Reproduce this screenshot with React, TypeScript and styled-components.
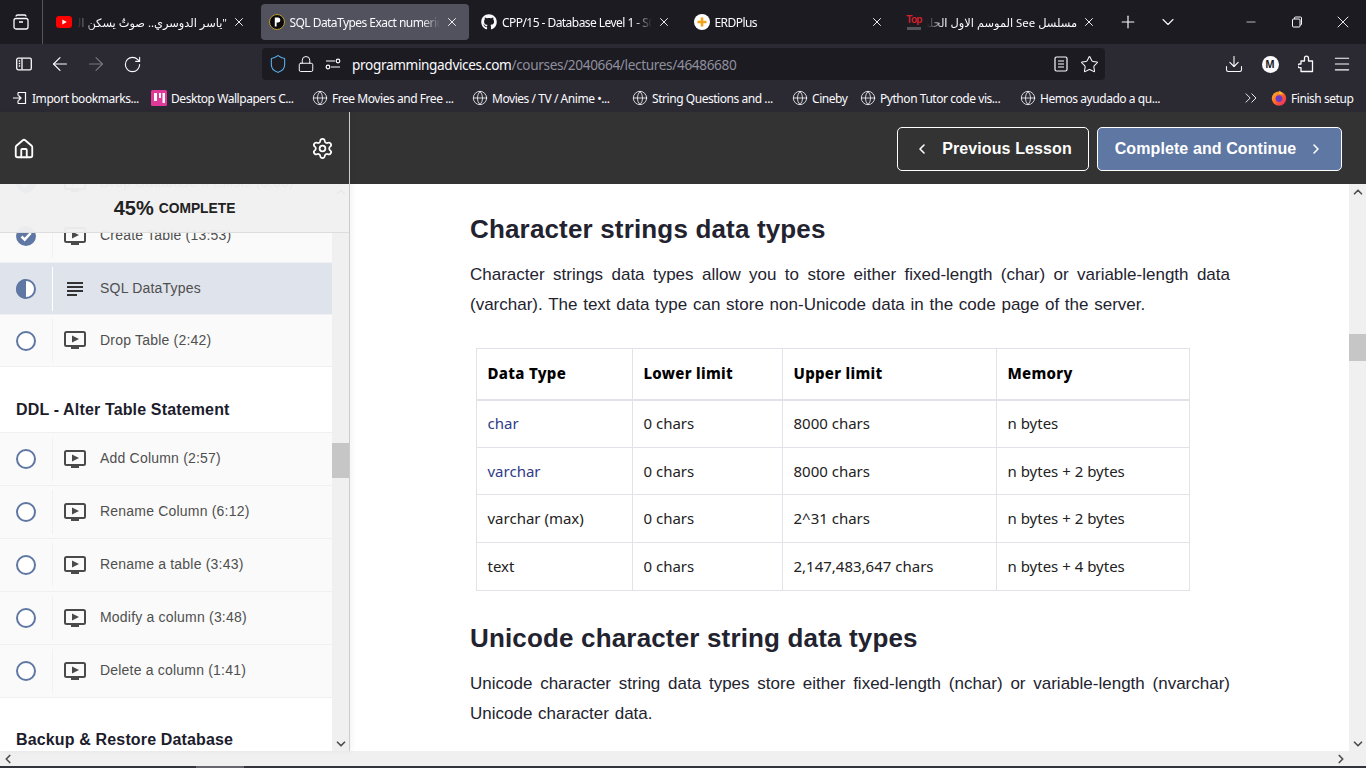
import { ReactNode } from 'react';
import styled, { createGlobalStyle } from 'styled-components';
import {
  ArrowLeft,
  ArrowRight,
  ChevronDown,
  ChevronLeft,
  ChevronRight,
  ChevronUp,
  ChevronsRight,
  Download,
  Globe,
  House,
  Lock,
  Menu,
  Minus,
  Plus,
  RotateCw,
  Settings,
  Shield,
  Star,
  X,
} from 'lucide-react';
import { FaGithub } from 'react-icons/fa';

const uiFont = '"Noto Sans", "DejaVu Sans", sans-serif';
const pageFont = '"Liberation Sans", Arial, sans-serif';

const GlobalStyle = createGlobalStyle`
  html, body {
    margin: 0;
    height: 100%;
    overflow: hidden;
    background: #2b2a33;
  }
  * {
    box-sizing: border-box;
  }
`;

const Window = styled.div`
  width: 1366px;
  height: 768px;
  display: flex;
  flex-direction: column;
  overflow: hidden;
  font-family: ${uiFont};
`;

/* browser chrome */

const TabStrip = styled.div`
  height: 44px;
  display: flex;
  align-items: flex-start;
  background: #1c1b22;
  color: #fbfbfe;
`;

const ViewButton = styled.div`
  width: 43px;
  height: 44px;
  display: flex;
  align-items: center;
  justify-content: center;
  border-right: 1px solid #55555c;
  margin-right: 5px;
`;

const Tab = styled.div<{ $active?: boolean }>`
  width: 208px;
  height: 36px;
  margin: 4px 4.5px 0 0;
  padding: 0 10px 0 8px;
  display: flex;
  align-items: center;
  gap: 5px;
  border-radius: 4px;
  background: ${({ $active }) => ($active ? '#52525e' : 'transparent')};
`;

const Favicon = styled.span`
  width: 16px;
  height: 16px;
  flex: none;
  display: flex;
  align-items: center;
  justify-content: center;
`;

const TabTitle = styled.span<{ $rtl?: boolean }>`
  flex: 1;
  min-width: 0;
  font-size: ${({ $rtl }) => ($rtl ? '11.4px' : '12px')};
  white-space: nowrap;
  overflow: hidden;
  letter-spacing: ${({ $rtl }) => ($rtl ? '0' : '-0.55px')};
  direction: ${({ $rtl }) => ($rtl ? 'rtl' : 'ltr')};
  mask-image: linear-gradient(
    ${({ $rtl }) => ($rtl ? 'to left' : 'to right')},
    #000 88%,
    transparent 100%
  );
`;

const TabClose = styled(X)`
  flex: none;
`;

const TabPlus = styled.div`
  width: 24px;
  height: 44px;
  margin-left: 5px;
  display: flex;
  align-items: center;
  justify-content: center;
`;

const TabList = styled.div`
  width: 24px;
  height: 44px;
  margin-left: 16px;
  display: flex;
  align-items: center;
  justify-content: center;
`;

const WindowControls = styled.div`
  margin-left: auto;
  display: flex;
`;

const WindowButton = styled.div`
  width: 46px;
  height: 44px;
  display: flex;
  align-items: center;
  justify-content: center;
`;

const Toolbar = styled.div`
  height: 40px;
  display: flex;
  align-items: center;
  padding: 0 16px;
  background: #2b2a33;
  color: #fbfbfe;
`;

const ToolIcon = styled.span<{ $width?: number; $dim?: boolean }>`
  width: ${({ $width }) => $width ?? 36}px;
  height: 32px;
  flex: none;
  display: flex;
  align-items: center;
  justify-content: center;
  color: ${({ $dim }) => ($dim ? '#77767e' : '#fbfbfe')};

  svg {
    flex: none;
  }
`;

const UrlBar = styled.div`
  width: 843px;
  height: 32px;
  margin-left: 102px;
  padding: 0 7px 0 8px;
  display: flex;
  align-items: center;
  background: #1c1b22;
  border-radius: 4px;
`;

const UrlText = styled.span`
  flex: 1;
  margin-left: 12px;
  font-size: 13.6px;
  letter-spacing: -0.35px;
  color: #fbfbfe;
  white-space: nowrap;
`;

const UrlPath = styled.span`
  color: #8f8f9d;
`;

const ToolbarEnd = styled.div`
  margin-left: auto;
  margin-right: -10px;
  display: flex;
  align-items: center;
`;

const Avatar = styled.span`
  width: 17px;
  height: 17px;
  border-radius: 50%;
  background: #fbfbfe;
  color: #1c1b22;
  font-size: 10px;
  font-weight: 700;
  display: flex;
  align-items: center;
  justify-content: center;
`;

const BookmarkBar = styled.div`
  height: 28px;
  padding: 0 12px;
  display: flex;
  align-items: center;
  background: #2b2a33;
  color: #fbfbfe;
  font-size: 12px;
  letter-spacing: -0.45px;
  white-space: nowrap;
`;

const Bookmark = styled.span<{ $width: number }>`
  width: ${({ $width }) => $width}px;
  flex: none;
  display: flex;
  align-items: center;
  gap: 4px;
`;

const BookmarkEnd = styled.div`
  margin-left: auto;
  display: flex;
  align-items: center;
  gap: 10px;
`;

/* page */

const Page = styled.div`
  flex: 1;
  min-height: 0;
  display: flex;
  flex-direction: column;
`;

const Columns = styled.div`
  flex: 1;
  min-height: 0;
  display: flex;
  background: #fff;
`;

const Sidebar = styled.aside`
  width: 350px;
  flex: none;
  position: relative;
  display: flex;
  flex-direction: column;
  border-right: 1px solid #ccc;
  box-shadow: 2px 0 6px rgba(0, 0, 0, 0.05);
  font-family: ${pageFont};
`;

const SidebarHeader = styled.div`
  height: 72px;
  flex: none;
  padding: 1px 15px 0 13px;
  display: flex;
  align-items: center;
  justify-content: space-between;
  background: #333;
  color: #fff;
`;

const SidebarBody = styled.div`
  flex: 1;
  min-height: 0;
  display: flex;
  position: relative;
  overflow: hidden;
`;

const Progress = styled.div`
  position: absolute;
  top: 0;
  left: 0;
  right: 0;
  height: 49px;
  display: flex;
  align-items: center;
  justify-content: center;
  gap: 5px;
  background: rgba(240, 240, 240, 0.96);
  border-bottom: 1px solid #ddd;
  color: #222;
  font-weight: 700;
  font-size: 13.8px;
`;

const ProgressValue = styled.span`
  font-size: 20px;
`;

const LessonList = styled.div`
  flex: 1;
  min-width: 0;
  margin-top: -27px;
`;

const SectionTitle = styled.h3<{ $top: number }>`
  margin: 0;
  height: 66px;
  padding: ${({ $top }) => $top}px 0 0 16px;
  font-size: 16px;
  line-height: 19px;
  letter-spacing: 0.15px;
  color: #1c1c2c;
  border-bottom: 1px solid #f0f0f3;
`;

const Row = styled.div<{ $slim?: boolean; $active?: boolean }>`
  height: ${({ $slim }) => ($slim ? 52 : 53)}px;
  display: flex;
  align-items: center;
  background: ${({ $active }) => ($active ? '#dfe3eb' : '#fafafa')};
  border-bottom: 1px solid #f0f0f3;
`;

const StatusCell = styled.div<{ $active?: boolean }>`
  width: 53px;
  height: 44px;
  flex: none;
  display: flex;
  align-items: center;
  justify-content: center;
  border-right: 1px solid ${({ $active }) => ($active ? '#fff' : '#f1f1f3')};
`;

const KindIcon = styled.span`
  width: 22px;
  margin-left: 11px;
  flex: none;
  display: flex;
  justify-content: center;
`;

const RowLabel = styled.span`
  margin: 0 0 2px 14px;
  font-size: 14px;
  letter-spacing: 0.2px;
  color: #4f4f4f;
  white-space: nowrap;
`;

const ScrollTrack = styled.div`
  width: 17px;
  flex: none;
  display: flex;
  flex-direction: column;
  align-items: center;
  background: #f0f0f0;
  color: #505050;
`;

const ScrollArrow = styled.span`
  height: 15px;
  flex: none;
  display: flex;
  align-items: center;
  justify-content: center;
`;

const ScrollThumb = styled.span<{ $top: number; $height: number }>`
  width: 17px;
  flex: none;
  margin-top: ${({ $top }) => $top}px;
  height: ${({ $height }) => $height}px;
  background: #c6c6c6;
`;

const ScrollFill = styled.span`
  flex: 1;
`;

const Main = styled.main`
  flex: 1;
  min-width: 0;
  display: flex;
  flex-direction: column;
  font-family: ${pageFont};
`;

const MainHeader = styled.div`
  height: 72px;
  flex: none;
  padding: 1px 24px 0 0;
  display: flex;
  align-items: center;
  justify-content: flex-end;
  gap: 8px;
  background: #333;
`;

const LessonButton = styled.button<{ $primary?: boolean }>`
  height: 44px;
  width: ${({ $primary }) => ($primary ? 245 : 192)}px;
  padding: 0;
  display: flex;
  align-items: center;
  justify-content: center;
  gap: 12px;
  border: 1px solid #fff;
  border-radius: 5px;
  background: ${({ $primary }) => ($primary ? '#5f77a3' : 'transparent')};
  color: #fff;
  font-family: ${pageFont};
  font-size: 16px;
  font-weight: 700;
  letter-spacing: 0.1px;
`;

const MainBody = styled.div`
  flex: 1;
  min-height: 0;
  display: flex;
`;

const Article = styled.article`
  flex: 1;
  min-width: 0;
  padding: 30px 119px 0 120px;
  overflow: hidden;
  color: #23232f;
`;

const Heading = styled.h2`
  margin: 0;
  font-size: 26px;
  line-height: 30px;
  font-weight: 700;
  letter-spacing: 0.16px;
`;

const Paragraph = styled.p`
  margin: 16px 0 0;
  font-size: 17px;
  line-height: 30px;
  word-spacing: 1px;
  text-align: justify;
`;

const DataTable = styled.table`
  width: 713px;
  margin: 28px 0 32px 6px;
  border-collapse: collapse;
  table-layout: fixed;
  font-family: "Noto Sans", sans-serif;
  font-size: 15px;
  color: #222;

  th,
  td {
    padding: 0 0 1px 10.5px;
    border: 1px solid #e1e3e8;
    text-align: left;
  }

  th {
    height: 51px;
    border-bottom-width: 2px;
    color: #000;
    font-weight: 800;
    letter-spacing: 0.3px;
  }

  td {
    height: 47.7px;
  }
`;

const TypeLink = styled.span`
  color: #2f3b87;
`;

const HScroll = styled.div`
  height: 15px;
  flex: none;
  padding: 0 18px 0 1px;
  display: flex;
  align-items: center;
  justify-content: space-between;
  background: #f0f0f0;
  color: #505050;
`;

const BottomEdge = styled.div`
  height: 2px;
  flex: none;
  background: #33343a;
`;

const EdgeMark = styled.div`
  width: 48px;
  height: 2px;
  margin-left: 196px;
  background: #66666c;
`;

/* drawn icons */

const LessonVideoIcon = () => (
  <svg width="22" height="19" viewBox="0 0 22 19">
    <rect x="1" y="1" width="20" height="14" rx="1.5" fill="none" stroke="#4a4a4a" strokeWidth="2" />
    <path d="M8 4.5 15 8 8 11.5Z" fill="#4a4a4a" />
    <rect x="7" y="16" width="8" height="2" fill="#4a4a4a" />
  </svg>
);

const LessonTextIcon = () => (
  <svg width="18" height="16" viewBox="0 0 18 16">
    <path d="M1 2h16M1 6h16M1 10h16M1 14h10" stroke="#333" strokeWidth="2" fill="none" />
  </svg>
);

const StatusIcon = ({ state }: { state: 'todo' | 'done' | 'half' }) => (
  <svg width="20" height="20" viewBox="0 0 20 20">
    {state === 'done' && (
      <>
        <circle cx="10" cy="10" r="10" fill="#5f77a3" />
        <path d="M5.5 10.5 8.7 13.6 14.7 7" stroke="#fff" strokeWidth="2.6" fill="none" />
      </>
    )}
    {state === 'half' && (
      <>
        <circle cx="10" cy="10" r="9" fill="#fff" stroke="#5f77a3" strokeWidth="2" />
        <path d="M10 0a10 10 0 0 0 0 20Z" fill="#5f77a3" />
      </>
    )}
    {state === 'todo' && <circle cx="10" cy="10" r="9" fill="#fff" stroke="#5f77a3" strokeWidth="2" />}
  </svg>
);

const FirefoxViewIcon = () => (
  <svg width="16" height="16" viewBox="0 0 16 16" fill="none" stroke="#fbfbfe" strokeWidth="1.3">
    <rect x="1" y="4.5" width="14" height="10.5" rx="2" />
    <path d="M3 2.5a1.5 1.5 0 0 1 1.5-1.5h7A1.5 1.5 0 0 1 13 2.5M6 8h4" />
  </svg>
);

const SidebarToggleIcon = () => (
  <svg width="16" height="16" viewBox="0 0 16 16" fill="none" stroke="#fbfbfe" strokeWidth="1.3">
    <rect x="0.7" y="2.2" width="14.6" height="11.6" rx="1.6" />
    <path d="M6 2.5v11M2.8 5h1.4M2.8 7.5h1.4M2.8 10h1.4" />
  </svg>
);

const TuneIcon = () => (
  <svg width="16" height="16" viewBox="0 0 16 16" fill="none" stroke="#fbfbfe" strokeWidth="1.2">
    <path d="M1 5h9M6 11h9" />
    <circle cx="13" cy="5" r="1.8" />
    <circle cx="3" cy="11" r="1.8" />
  </svg>
);

const ReaderIcon = () => (
  <svg width="14" height="16" viewBox="0 0 14 16" fill="none" stroke="#fbfbfe" strokeWidth="1.2">
    <rect x="1" y="1" width="12" height="14" rx="1.5" />
    <path d="M4 5h6M4 8h6M4 11h6" />
  </svg>
);

const PuzzleIcon = () => (
  <svg width="16" height="18" viewBox="0 0 16 18" fill="none" stroke="#fbfbfe" strokeWidth="1.3" strokeLinejoin="round">
    <path d="M14.500 6H10.500V3.200a2 2 0 0 0-4 0V6H3v3H1.500a1.800 1.800 0 0 0 0 3.600H3V16.500h11.500Z" />
  </svg>
);

const RestoreIcon = () => (
  <svg width="12" height="12" viewBox="0 0 12 12" fill="none" stroke="#fbfbfe" strokeWidth="1">
    <rect x="1.5" y="3" width="7.5" height="8" rx="1" />
    <path d="M3.5 3V2a1 1 0 0 1 1-1h5a1 1 0 0 1 1 1v6a1 1 0 0 1-1 1H9" />
  </svg>
);

const YoutubeIcon = () => (
  <svg width="16" height="12" viewBox="0 0 16 12">
    <rect width="16" height="12" rx="3" fill="#f00" />
    <path d="M6.3 3.4 10.8 6 6.3 8.6Z" fill="#fff" />
  </svg>
);

const AdvicesIcon = () => (
  <svg width="16" height="16" viewBox="0 0 16 16">
    <circle cx="8" cy="8" r="7.5" fill="#0b0b0b" stroke="#b89a2c" />
    <path d="M5.8 3.6h3a2.5 2.5 0 0 1 0 5H7.6v3.8H5.8Z" fill="#fff" />
  </svg>
);

const ErdPlusIcon = () => (
  <svg width="16" height="16" viewBox="0 0 16 16">
    <circle cx="8" cy="8" r="8" fill="#fff" />
    <path d="M8 3.5v9M3.5 8h9" stroke="#f2a31c" strokeWidth="2.6" />
  </svg>
);

const WallpaperIcon = () => (
  <svg width="16" height="16" viewBox="0 0 16 16">
    <rect width="16" height="16" rx="1.5" fill="#e0399a" />
    <path d="M3 3h3v8H3ZM8 3h2v5H8ZM11.500 3H14v10h-2.500Z" fill="#fff" />
  </svg>
);

const ImportIcon = () => (
  <svg width="16" height="16" viewBox="0 0 16 16" fill="none" stroke="#fbfbfe" strokeWidth="1.2">
    <path d="M6 2.500h7.500v11H6M6 2.500v3M6 13.500v-3M1 8h8M6.500 5.500 9 8l-2.500 2.500" />
  </svg>
);

const FirefoxIcon = () => (
  <svg width="16" height="16" viewBox="0 0 16 16">
    <defs>
      <linearGradient id="ff" x1="0" y1="0" x2="1" y2="1">
        <stop offset="0" stopColor="#ffbd2e" />
        <stop offset="0.55" stopColor="#ff5a2c" />
        <stop offset="1" stopColor="#e3217a" />
      </linearGradient>
    </defs>
    <circle cx="8" cy="8.600" r="7.200" fill="url(#ff)" />
    <path d="M8.500 0.500c1 1.500 3 2.500 3.500 4L8 4Z" fill="#ffbd2e" />
    <circle cx="8" cy="8.600" r="3.400" fill="#6b3bc4" />
  </svg>
);

const TopBadge = styled.span`
  display: flex;
  flex-direction: column;
  align-items: center;
  gap: 2px;
`;

const TopWord = styled.span`
  color: #d3202a;
  font-family: ${pageFont};
  font-weight: 700;
  font-size: 10px;
  line-height: 10px;
  letter-spacing: -0.7px;
`;

const TopBar = styled.span`
  width: 14px;
  height: 3px;
  background: #55555c;
`;

const TopIcon = () => (
  <TopBadge>
    <TopWord>Top</TopWord>
    <TopBar />
  </TopBadge>
);

/* data */

type TabData = { icon: ReactNode; title: string; rtl?: boolean; active?: boolean };

const tabs: TabData[] = [
  { icon: <YoutubeIcon />, title: '"ياسر الدوسري.. صوتٌ يسكن الليل', rtl: true },
  { icon: <AdvicesIcon />, title: 'SQL DataTypes Exact numeric data', active: true },
  { icon: <FaGithub size={16} />, title: 'CPP/15 - Database Level 1 - SQL Server' },
  { icon: <ErdPlusIcon />, title: 'ERDPlus' },
  { icon: <TopIcon />, title: 'مسلسل See الموسم الاول الحلقة', rtl: true },
];

const globe = <Globe size={16} strokeWidth={1.2} />;

const bookmarks: { icon: ReactNode; label: string; width: number }[] = [
  { icon: <ImportIcon />, label: 'Import bookmarks...', width: 139 },
  { icon: <WallpaperIcon />, label: 'Desktop Wallpapers C...', width: 161 },
  { icon: globe, label: 'Free Movies and Free ...', width: 160 },
  { icon: globe, label: 'Movies / TV / Anime •...', width: 160 },
  { icon: globe, label: 'String Questions and ...', width: 160 },
  { icon: globe, label: 'Cineby', width: 68 },
  { icon: globe, label: 'Python Tutor code vis...', width: 160 },
  { icon: globe, label: 'Hemos ayudado a qu...', width: 150 },
];

type Lesson = { label: string; status: 'todo' | 'done' | 'half'; text?: boolean; slim?: boolean };

const sections: { title?: string; titleTop?: number; lessons: Lesson[] }[] = [
  {
    lessons: [
      { label: 'Drop Database If Exists (3:06)', status: 'done' },
      { label: 'Create Table (13:53)', status: 'done' },
      { label: 'SQL DataTypes', status: 'half', text: true, slim: true },
      { label: 'Drop Table (2:42)', status: 'todo', slim: true },
    ],
  },
  {
    title: 'DDL - Alter Table Statement',
    titleTop: 33,
    lessons: [
      { label: 'Add Column (2:57)', status: 'todo' },
      { label: 'Rename Column (6:12)', status: 'todo' },
      { label: 'Rename a table (3:43)', status: 'todo' },
      { label: 'Modify a column (3:48)', status: 'todo' },
      { label: 'Delete a column (1:41)', status: 'todo' },
    ],
  },
  { title: 'Backup & Restore Database', titleTop: 32, lessons: [] },
];

const tableRows = [
  { type: 'char', link: true, lower: '0 chars', upper: '8000 chars', memory: 'n bytes' },
  { type: 'varchar', link: true, lower: '0 chars', upper: '8000 chars', memory: 'n bytes + 2 bytes' },
  { type: 'varchar (max)', lower: '0 chars', upper: '2^31 chars', memory: 'n bytes + 2 bytes' },
  { type: 'text', lower: '0 chars', upper: '2,147,483,647 chars', memory: 'n bytes + 4 bytes' },
];

export default function App() {
  return (
    <Window>
      <GlobalStyle />
      <TabStrip>
        <ViewButton>
          <FirefoxViewIcon />
        </ViewButton>
        {tabs.map((tab) => (
          <Tab key={tab.title} $active={tab.active}>
            <Favicon>{tab.icon}</Favicon>
            <TabTitle $rtl={tab.rtl}>{tab.title}</TabTitle>
            <TabClose size={14} strokeWidth={1.6} />
          </Tab>
        ))}
        <TabPlus>
          <Plus size={20} strokeWidth={1.4} />
        </TabPlus>
        <TabList>
          <ChevronDown size={20} strokeWidth={1.3} />
        </TabList>
        <WindowControls>
          <WindowButton>
            <Minus size={14} strokeWidth={1.2} />
          </WindowButton>
          <WindowButton>
            <RestoreIcon />
          </WindowButton>
          <WindowButton>
            <X size={20} strokeWidth={1.1} />
          </WindowButton>
        </WindowControls>
      </TabStrip>

      <Toolbar>
        <ToolIcon $width={16}>
          <SidebarToggleIcon />
        </ToolIcon>
        <ToolIcon $width={56}>
          <ArrowLeft size={22} strokeWidth={1.3} />
        </ToolIcon>
        <ToolIcon $width={16} $dim>
          <ArrowRight size={22} strokeWidth={1.3} />
        </ToolIcon>
        <ToolIcon $width={56}>
          <RotateCw size={19} strokeWidth={1.4} />
        </ToolIcon>
        <UrlBar>
          <ToolIcon $width={16}>
            <Shield size={20} strokeWidth={1.3} color="#5ab0e8" />
          </ToolIcon>
          <ToolIcon $width={40}>
            <Lock size={18} strokeWidth={1.3} />
          </ToolIcon>
          <ToolIcon $width={14}>
            <TuneIcon />
          </ToolIcon>
          <UrlText>
            programmingadvices.com<UrlPath>/courses/2040664/lectures/46486680</UrlPath>
          </UrlText>
          <ToolIcon $width={38}>
            <ReaderIcon />
          </ToolIcon>
          <ToolIcon $width={18}>
            <Star size={19} strokeWidth={1.3} />
          </ToolIcon>
        </UrlBar>
        <ToolbarEnd>
          <ToolIcon>
            <Download size={20} strokeWidth={1.3} />
          </ToolIcon>
          <ToolIcon>
            <Avatar>M</Avatar>
          </ToolIcon>
          <ToolIcon>
            <PuzzleIcon />
          </ToolIcon>
          <ToolIcon>
            <Menu size={20} strokeWidth={1.3} />
          </ToolIcon>
        </ToolbarEnd>
      </Toolbar>

      <BookmarkBar>
        {bookmarks.map((mark) => (
          <Bookmark key={mark.label} $width={mark.width}>
            {mark.icon}
            {mark.label}
          </Bookmark>
        ))}
        <BookmarkEnd>
          <ChevronsRight size={20} strokeWidth={1.1} />
          <Bookmark $width={83}>
            <FirefoxIcon />
            Finish setup
          </Bookmark>
        </BookmarkEnd>
      </BookmarkBar>

      <Page>
        <Columns>
          <Sidebar>
            <SidebarHeader>
              <House size={22} strokeWidth={2} />
              <Settings size={23} strokeWidth={1.8} />
            </SidebarHeader>
            <SidebarBody>
              <LessonList>
                {sections.map((section) => (
                  <div key={section.title ?? 'start'}>
                    {section.title && <SectionTitle $top={section.titleTop ?? 33}>{section.title}</SectionTitle>}
                    {section.lessons.map((lesson) => (
                      <Row key={lesson.label} $slim={lesson.slim} $active={lesson.status === 'half'}>
                        <StatusCell $active={lesson.status === 'half'}>
                          <StatusIcon state={lesson.status} />
                        </StatusCell>
                        <KindIcon>{lesson.text ? <LessonTextIcon /> : <LessonVideoIcon />}</KindIcon>
                        <RowLabel>{lesson.label}</RowLabel>
                      </Row>
                    ))}
                  </div>
                ))}
              </LessonList>
              <ScrollTrack>
                <ScrollArrow>
                  <ChevronUp size={14} strokeWidth={3} />
                </ScrollArrow>
                <ScrollThumb $top={244} $height={35} />
                <ScrollFill />
                <ScrollArrow>
                  <ChevronDown size={14} strokeWidth={3} />
                </ScrollArrow>
              </ScrollTrack>
              <Progress>
                <ProgressValue>45%</ProgressValue> COMPLETE
              </Progress>
            </SidebarBody>
          </Sidebar>

          <Main>
            <MainHeader>
              <LessonButton>
                <ChevronLeft size={16} strokeWidth={2.4} />
                Previous Lesson
              </LessonButton>
              <LessonButton $primary>
                Complete and Continue
                <ChevronRight size={16} strokeWidth={2.4} />
              </LessonButton>
            </MainHeader>
            <MainBody>
              <Article>
                <Heading>Character strings data types</Heading>
                <Paragraph>
                  Character strings data types allow you to store either fixed-length (char) or variable-length data
                  (varchar). The text data type can store non-Unicode data in the code page of the server.
                </Paragraph>
                <DataTable>
                  <colgroup>
                    <col width="156" />
                    <col width="150" />
                    <col width="214" />
                    <col width="193" />
                  </colgroup>
                  <thead>
                    <tr>
                      <th>Data Type</th>
                      <th>Lower limit</th>
                      <th>Upper limit</th>
                      <th>Memory</th>
                    </tr>
                  </thead>
                  <tbody>
                    {tableRows.map((row) => (
                      <tr key={row.type}>
                        <td>{row.link ? <TypeLink>{row.type}</TypeLink> : row.type}</td>
                        <td>{row.lower}</td>
                        <td>{row.upper}</td>
                        <td>{row.memory}</td>
                      </tr>
                    ))}
                  </tbody>
                </DataTable>
                <Heading>Unicode character string data types</Heading>
                <Paragraph>
                  Unicode character string data types store either fixed-length (nchar) or variable-length (nvarchar)
                  Unicode character data.
                </Paragraph>
              </Article>
              <ScrollTrack>
                <ScrollArrow>
                  <ChevronUp size={14} strokeWidth={3} />
                </ScrollArrow>
                <ScrollThumb $top={135} $height={27} />
                <ScrollFill />
                <ScrollArrow>
                  <ChevronDown size={14} strokeWidth={3} />
                </ScrollArrow>
              </ScrollTrack>
            </MainBody>
          </Main>
        </Columns>
        <HScroll>
          <ChevronLeft size={14} strokeWidth={3} />
          <ChevronRight size={14} strokeWidth={3} />
        </HScroll>
        <BottomEdge>
          <EdgeMark />
        </BottomEdge>
      </Page>
    </Window>
  );
}
